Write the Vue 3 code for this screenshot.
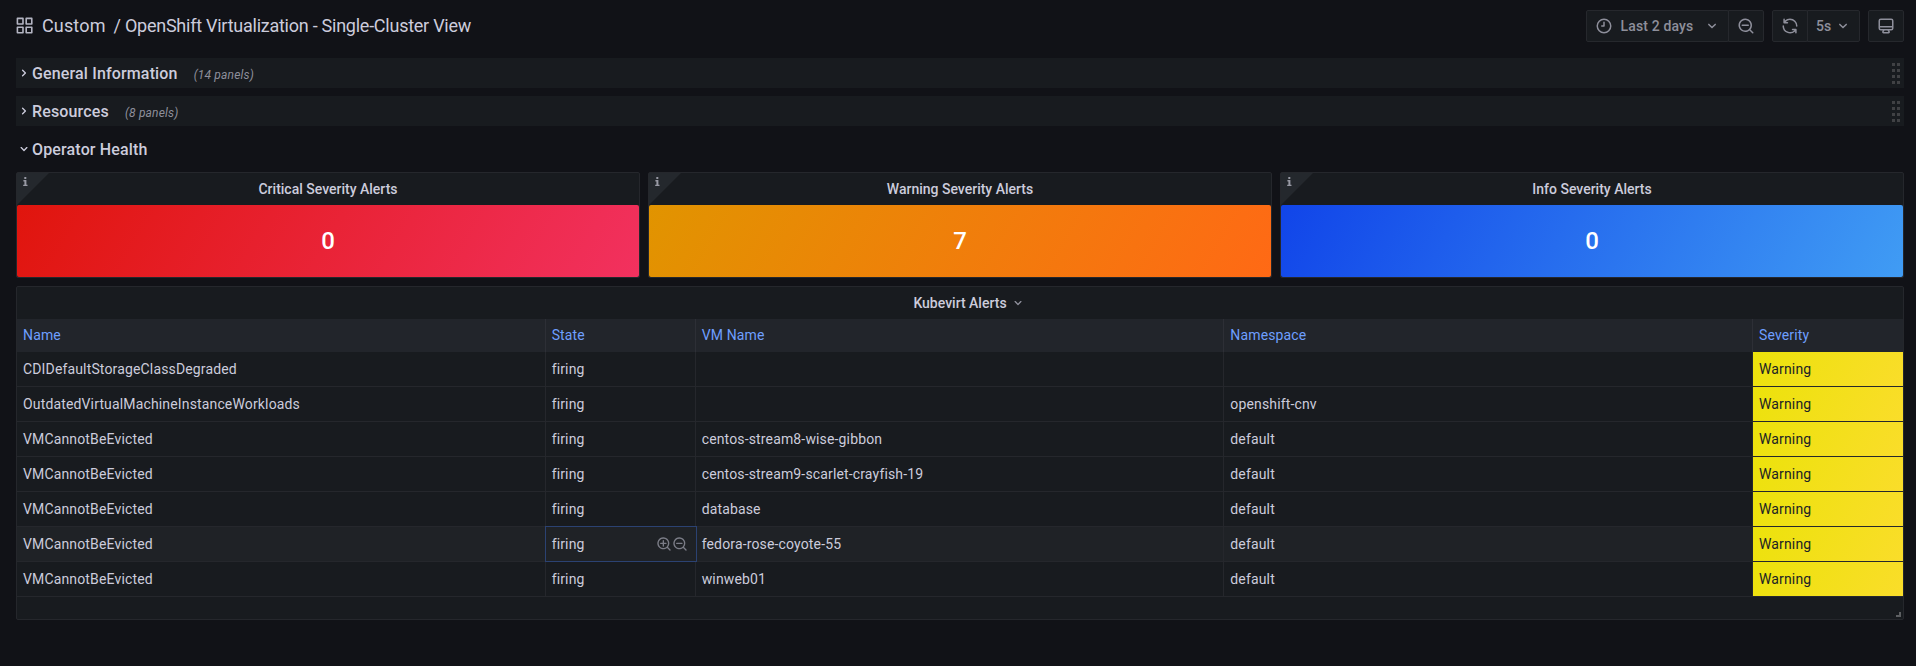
<script setup>
const icons = {
  apps: 'M10,13H3a1,1,0,0,0-1,1v7a1,1,0,0,0,1,1h7a1,1,0,0,0,1-1V14A1,1,0,0,0,10,13ZM9,20H4V15H9ZM21,2H14a1,1,0,0,0-1,1v7a1,1,0,0,0,1,1h7a1,1,0,0,0,1-1V3A1,1,0,0,0,21,2ZM20,9H15V4h5Zm1,4H14a1,1,0,0,0-1,1v7a1,1,0,0,0,1,1h7a1,1,0,0,0,1-1V14A1,1,0,0,0,21,13Zm-1,7H15V15h5ZM10,2H3A1,1,0,0,0,2,3v7a1,1,0,0,0,1,1h7a1,1,0,0,0,1-1V3A1,1,0,0,0,10,2ZM9,9H4V4H9Z',
  clock: 'M12,2A10,10,0,1,0,22,12,10,10,0,0,0,12,2Zm0,18a8,8,0,1,1,8-8A8,8,0,0,1,12,20ZM12,6a1,1,0,0,0-1,1v4H9a1,1,0,0,0,0,2h3a1,1,0,0,0,1-1V7A1,1,0,0,0,12,6Z',
  zoomOut: 'M21.71,20.29,18,16.61A9,9,0,1,0,16.61,18l3.68,3.68a1,1,0,0,0,1.42,0A1,1,0,0,0,21.71,20.29ZM11,18a7,7,0,1,1,7-7A7,7,0,0,1,11,18Zm4-8H7a1,1,0,0,0,0,2h8a1,1,0,0,0,0-2Z',
  zoomIn: 'M21.71,20.29,18,16.61A9,9,0,1,0,16.61,18l3.68,3.68a1,1,0,0,0,1.42,0A1,1,0,0,0,21.71,20.29ZM11,18a7,7,0,1,1,7-7A7,7,0,0,1,11,18ZM15,10H12V7a1,1,0,0,0-2,0v3H7a1,1,0,0,0,0,2h3v3a1,1,0,0,0,2,0V12h3a1,1,0,0,0,0-2Z',
  sync: 'M19.91,15.51H15.38a1,1,0,0,0,0,2h2.4A8,8,0,0,1,4,12a1,1,0,1,0-2,0,10,10,0,0,0,16.88,7.23V21a1,1,0,0,0,2,0V16.5A1,1,0,0,0,19.91,15.51ZM12,2A10,10,0,0,0,5.12,4.77V3a1,1,0,0,0-2,0V7.5a1,1,0,0,0,1,1h4.5a1,1,0,0,0,0-2H6.22A8,8,0,0,1,20,12a1,1,0,0,0,2,0A10,10,0,0,0,12,2Z',
  down: 'M17,9.17a1,1,0,0,0-1.41,0L12,12.71,8.46,9.17a1,1,0,0,0-1.41,0,1,1,0,0,0,0,1.42l4.24,4.24a1,1,0,0,0,1.42,0L17,10.59A1,1,0,0,0,17,9.17Z',
  right: 'M14.83,11.29,10.59,7.05a1,1,0,0,0-1.42,0,1,1,0,0,0,0,1.41L12.71,12,9.17,15.54a1,1,0,0,0,0,1.41,1,1,0,0,0,.71.29,1,1,0,0,0,.71-.29l4.24-4.24A1,1,0,0,0,14.83,11.29Z',
  monitor: 'M19,2H5A3,3,0,0,0,2,5V15a3,3,0,0,0,3,3H7.64l-.58,1a2,2,0,0,0,0,2,2,2,0,0,0,1.75,1h6.46A2,2,0,0,0,17,21a2,2,0,0,0,0-2l-.59-1H19a3,3,0,0,0,3-3V5A3,3,0,0,0,19,2ZM8.77,20,10,18H14l1.2,2ZM20,15a1,1,0,0,1-1,1H5a1,1,0,0,1-1-1V14H20Zm0-3H4V5A1,1,0,0,1,5,4H19a1,1,0,0,1,1,1Z',
}

const sections = [
  { title: 'General Information', note: '(14 panels)' },
  { title: 'Resources', note: '(8 panels)' },
]

const stats = [
  { title: 'Critical Severity Alerts', value: 0, tone: 'critical' },
  { title: 'Warning Severity Alerts', value: 7, tone: 'warning' },
  { title: 'Info Severity Alerts', value: 0, tone: 'info' },
]

const columns = ['Name', 'State', 'VM Name', 'Namespace', 'Severity']

const alerts = [
  { name: 'CDIDefaultStorageClassDegraded', vm: '', ns: '' },
  { name: 'OutdatedVirtualMachineInstanceWorkloads', vm: '', ns: 'openshift-cnv' },
  { name: 'VMCannotBeEvicted', vm: 'centos-stream8-wise-gibbon', ns: 'default' },
  { name: 'VMCannotBeEvicted', vm: 'centos-stream9-scarlet-crayfish-19', ns: 'default' },
  { name: 'VMCannotBeEvicted', vm: 'database', ns: 'default' },
  { name: 'VMCannotBeEvicted', vm: 'fedora-rose-coyote-55', ns: 'default', active: true },
  { name: 'VMCannotBeEvicted', vm: 'winweb01', ns: 'default' },
]
</script>

<template>
  <div class="page">
    <header class="toolbar">
      <svg class="apps" viewBox="0 0 24 24"><path :d="icons.apps" /></svg>
      <h1 class="crumbs"><span class="folder">Custom</span><span>/ OpenShift Virtualization - Single-Cluster View</span></h1>
      <div class="controls">
        <div class="group">
          <button class="btn range">
            <svg class="i18" viewBox="0 0 24 24"><path :d="icons.clock" /></svg>
            <span class="range-text">Last 2 days</span>
            <svg class="i18" viewBox="0 0 24 24"><path :d="icons.down" /></svg>
          </button>
          <button class="btn square"><svg class="i18" viewBox="0 0 24 24"><path :d="icons.zoomOut" /></svg></button>
        </div>
        <div class="group">
          <button class="btn square"><svg class="i18" viewBox="0 0 24 24"><path :d="icons.sync" /></svg></button>
          <button class="btn interval">
            <span>5s</span>
            <svg class="i18" viewBox="0 0 24 24"><path :d="icons.down" /></svg>
          </button>
        </div>
        <div class="group">
          <button class="btn square"><svg class="i18" viewBox="0 0 24 24"><path :d="icons.monitor" /></svg></button>
        </div>
      </div>
    </header>

    <main class="board">
      <section v-for="s in sections" :key="s.title" class="row collapsed">
        <svg class="i16" viewBox="0 0 24 24"><path :d="icons.right" /></svg>
        <h2>{{ s.title }}</h2>
        <span class="note">{{ s.note }}</span>
        <span class="grip"><i v-for="n in 8" :key="n"></i></span>
      </section>
      <section class="row">
        <svg class="i16" viewBox="0 0 24 24"><path :d="icons.down" /></svg>
        <h2>Operator Health</h2>
      </section>

      <div class="stats">
        <article v-for="s in stats" :key="s.title" class="panel stat">
          <span class="corner"><svg viewBox="0 0 5 9"><path d="M1.3 0h2v2h-2zM.4 3.1h3v4.6h1.1V9H.2V7.7h1.2V4.4h-1z" /></svg></span>
          <h3 class="panel-title">{{ s.title }}</h3>
          <div class="value" :class="s.tone">{{ s.value }}</div>
        </article>
      </div>

      <article class="panel alerts">
        <h3 class="panel-title">Kubevirt Alerts<svg class="i16 caret" viewBox="0 0 24 24"><path :d="icons.down" /></svg></h3>
        <div class="grid head">
          <div v-for="c in columns" :key="c" class="cell">{{ c }}</div>
        </div>
        <div v-for="(a, i) in alerts" :key="i" class="grid line" :class="{ active: a.active }">
          <div class="cell">{{ a.name }}</div>
          <div class="cell state">
            <span>firing</span>
            <span v-if="a.active" class="filters">
              <svg viewBox="0 0 24 24"><path :d="icons.zoomIn" /></svg>
              <svg viewBox="0 0 24 24"><path :d="icons.zoomOut" /></svg>
            </span>
          </div>
          <div class="cell">{{ a.vm }}</div>
          <div class="cell">{{ a.ns }}</div>
          <div class="cell severity">Warning</div>
        </div>
        <span class="resize"></span>
      </article>
    </main>
  </div>
</template>

<style>
body {
  background: #111217;
}
</style>

<style scoped>
* {
  box-sizing: border-box;
}

.page {
  height: 666px;
  overflow: hidden;
  background: #111217;
  color: #ccccdc;
  font: 400 14px/22px Roboto, "Liberation Sans", sans-serif;
  letter-spacing: 0.15px;
}

svg {
  display: block;
  flex: none;
  fill: currentColor;
}

h1,
h2,
h3 {
  margin: 0;
}

.i16 {
  width: 16px;
  height: 16px;
}

.i18 {
  width: 18px;
  height: 18px;
}

.toolbar {
  display: flex;
  align-items: center;
  height: 52px;
  padding: 0 12px 0 15.4px;
}

.apps {
  width: 19.2px;
  height: 19.2px;
  color: #b4b5c3;
}

.crumbs {
  display: flex;
  margin-left: 7.4px;
  font-size: 18px;
  font-weight: 400;
  line-height: 24px;
  letter-spacing: -0.25px;
}

.folder {
  margin-right: 8px;
  letter-spacing: 0.15px;
}

.controls {
  display: flex;
  gap: 8px;
  margin-left: auto;
}

.group {
  display: flex;
}

.btn {
  display: flex;
  align-items: center;
  height: 32px;
  margin: 0;
  padding: 0 8px;
  border: 1px solid #26282d;
  border-radius: 2px;
  background: #181b1f;
  color: #8e8f9b;
  font: inherit;
  font-weight: 500;
  letter-spacing: 0.15px;
}

.btn + .btn {
  margin-left: -1px;
  border-radius: 0 2px 2px 0;
}

.range {
  width: 143px;
  padding-right: 7px;
}

.range-text {
  margin: 0 auto 0 7.5px;
}

.square {
  width: 36px;
}

.interval {
  width: 53px;
  justify-content: space-between;
  padding: 0 7px 0 8px;
}

.board {
  display: flex;
  flex-direction: column;
  gap: 8px;
  padding: 6px 12px 0 16px;
}

.row {
  display: flex;
  align-items: center;
  height: 30px;
}

.collapsed {
  background: #181b1f;
}

.row h2 {
  padding-top: 2px;
  font-size: 16px;
  font-weight: 500;
  line-height: 22px;
  letter-spacing: 0.15px;
}

.note {
  margin: 4px 0 0 16px;
  color: #8e8f9b;
  font-size: 12px;
  font-style: italic;
  letter-spacing: 0.18px;
}

.grip {
  display: grid;
  grid-template-columns: 3px 3px;
  gap: 3px 2px;
  margin: 0 4px 0 auto;
}

.grip i {
  width: 3px;
  height: 3px;
  background: #404144;
}

.stats {
  display: grid;
  grid-template-columns: repeat(3, 1fr);
  gap: 8px;
}

.panel {
  position: relative;
  border: 1px solid #25272c;
  border-radius: 2px;
  background: #181b1f;
}

.stat {
  height: 106px;
}

.panel-title {
  display: flex;
  align-items: center;
  justify-content: center;
  height: 32px;
  font-size: 14px;
  font-weight: 500;
  line-height: 22px;
  letter-spacing: 0;
}

.corner {
  position: absolute;
  top: 0;
  left: 0;
  width: 32px;
  height: 32px;
  background: #24282d;
  clip-path: polygon(0 0, 100% 0, 0 100%);
}

.corner svg {
  width: 5px;
  height: 9px;
  margin: 4px 0 0 6px;
  color: #9899a4;
}

.value {
  display: flex;
  align-items: center;
  justify-content: center;
  height: 72px;
  border-radius: 2px;
  color: #fff;
  font-size: 24px;
  font-weight: 500;
  letter-spacing: 0;
}

.critical {
  background: linear-gradient(120deg, #e0150d, #f2315f);
}

.warning {
  background: linear-gradient(120deg, #e19400, #ff6915);
}

.info {
  background: linear-gradient(120deg, #1145e9, #409cf4);
}

.alerts {
  height: 334px;
}

.caret {
  margin-left: 3px;
  color: #8e8f9b;
}

.alerts .panel-title {
  padding-left: 19px;
}

.grid {
  display: grid;
  grid-template-columns: 528.67px 150px 528.66px 528.67px 150px;
}

.head {
  height: 33px;
  background: #22252b;
  color: #6e9fff;
}

.cell {
  display: flex;
  align-items: center;
  padding: 0 6px;
  border-right: 1px solid #25272c;
}

.head .cell {
  padding-bottom: 1px;
  border-color: #2d2f36;
}

.cell:last-child {
  border-right: 0;
}

.line {
  height: 35px;
  border-bottom: 1px solid #25272c;
}

.active {
  background: #1f2226;
}

.state {
  justify-content: space-between;
}

.active .state {
  margin: -1px -1px -1px -1px;
  padding: 0 8px 0 6px;
  border: 1px solid #2b4272;
}

.filters {
  display: flex;
  color: #7b7d87;
}

.filters svg {
  width: 16px;
  height: 16px;
}

.severity {
  background: linear-gradient(120deg, #ece20b, #fadd2a);
  color: #202226;
}

.resize {
  position: absolute;
  right: 2px;
  bottom: 2px;
  width: 5px;
  height: 5px;
  border-right: 2px solid #5d5f62;
  border-bottom: 2px solid #5d5f62;
}
</style>
